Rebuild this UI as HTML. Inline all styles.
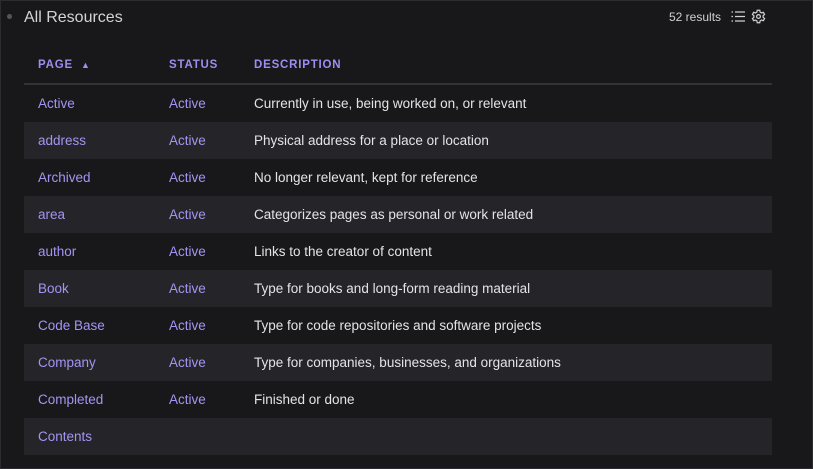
<!DOCTYPE html><html><head><style>
body{margin:0;width:813px;height:469px;background:#18181b;font-family:"Liberation Sans",sans-serif;overflow:hidden;position:relative;box-shadow:inset 0 0 0 1px #2c2c30}
.dot{position:absolute;left:7px;top:14px;width:5px;height:5px;border-radius:50%;background:#55555a}
.title{position:absolute;left:24px;top:9px;font-size:16px;color:#d4d4d8}
.res{position:absolute;left:669px;top:10px;font-size:12px;color:#cfcfd4}
table{position:absolute;left:24px;top:51px;width:748px;border-collapse:collapse;font-size:13.5px}
th{text-align:left;color:#9d8ef0;font-size:11.5px;letter-spacing:0.8px;font-weight:bold;height:24px;vertical-align:top;padding:8px 0 0 14px;border-bottom:2px solid #333337}
td{height:37px;padding:0 0 0 14px;color:#e4e4e7}
td.l{color:#a295f2}
tr:nth-child(odd) td{background:#252529}
</style></head><body>
<div class="dot"></div><div class="title">All Resources</div>
<div class="res">52 results</div>
<svg style="position:absolute;left:731px;top:10px" width="14" height="13" viewBox="0 0 14 13" fill="none" stroke="#cfcfd4" stroke-width="1.3"><path d="M4 2h10M4 6.5h10M4 11h10M0.5 2h1.5M0.5 6.5h1.5M0.5 11h1.5"/></svg>
<svg style="position:absolute;left:751px;top:9px" width="15" height="15" viewBox="0 0 24 24" fill="none" stroke="#cfcfd4" stroke-width="2"><circle cx="12" cy="12" r="3"/><path d="M10 2h4l.6 3 2.2 1.3 2.9-1 2 3.4-2.3 2v2.6l2.3 2-2 3.4-2.9-1-2.2 1.3-.6 3h-4l-.6-3-2.2-1.3-2.9 1-2-3.4 2.3-2v-2.6l-2.3-2 2-3.4 2.9 1L9.4 5z"/></svg>
<table>
<tr><th style="width:117px">PAGE <span style="font-size:9px;margin-left:4px">▲</span></th><th style="width:71px">STATUS</th><th>DESCRIPTION</th></tr>
<tr><td class="l">Active</td><td class="l">Active</td><td>Currently in use, being worked on, or relevant</td></tr>
<tr><td class="l">address</td><td class="l">Active</td><td>Physical address for a place or location</td></tr>
<tr><td class="l">Archived</td><td class="l">Active</td><td>No longer relevant, kept for reference</td></tr>
<tr><td class="l">area</td><td class="l">Active</td><td>Categorizes pages as personal or work related</td></tr>
<tr><td class="l">author</td><td class="l">Active</td><td>Links to the creator of content</td></tr>
<tr><td class="l">Book</td><td class="l">Active</td><td>Type for books and long-form reading material</td></tr>
<tr><td class="l">Code Base</td><td class="l">Active</td><td>Type for code repositories and software projects</td></tr>
<tr><td class="l">Company</td><td class="l">Active</td><td>Type for companies, businesses, and organizations</td></tr>
<tr><td class="l">Completed</td><td class="l">Active</td><td>Finished or done</td></tr>
<tr><td class="l">Contents</td><td></td><td></td></tr>
</table>
</body></html>
